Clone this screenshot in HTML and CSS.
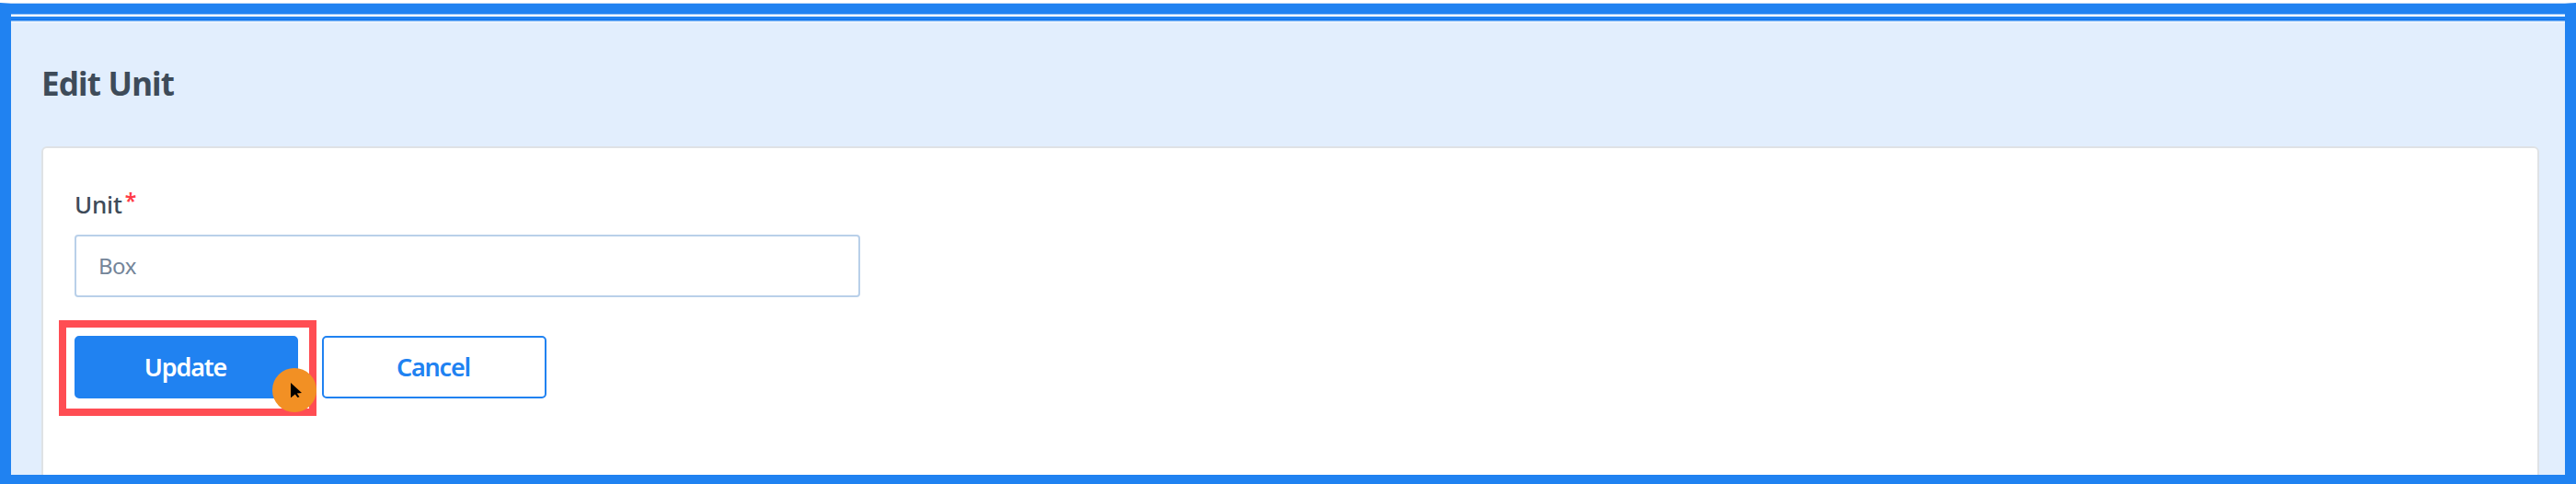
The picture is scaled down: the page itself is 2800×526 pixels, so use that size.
FILE: index.html
```
<!DOCTYPE html>
<html lang="en">
<head>
    <meta charset="UTF-8">
    <meta name="viewport" content="width=device-width, initial-scale=1.0">
    <title>Edit Unit</title>
    <link rel="stylesheet" href="styles.css">
</head>
<body>
    <div class="frame">
        <div class="top-line"></div>
        <main class="page">
            <h1>Edit Unit</h1>
            <form class="card">
                <label for="unit">Unit<span class="required">*</span></label>
                <input type="text" id="unit" value="Box">
                <div class="actions">
                    <div class="highlight">
                        <button type="button" class="btn btn-primary"><span>Update</span></button>
                        <svg class="pointer" width="48" height="48" viewBox="0 0 48 48">
                            <circle cx="24" cy="24" r="24" fill="#f29024"/>
                            <path d="M20 16 L32 27 L26.8 27.5 L29.5 31.3 L27.5 32 L24.8 28.6 L20 32.3 Z" fill="#000"/>
                        </svg>
                    </div>
                    <button type="button" class="btn btn-outline"><span>Cancel</span></button>
                </div>
            </form>
        </main>
    </div>
</body>
</html>
```
FILE: styles.css
```
* {
    box-sizing: border-box;
}

body {
    margin: 0;
    padding-top: 3px;
    height: 526px;
    overflow: hidden;
    background: #fff;
    font-family: "Noto Sans", "Open Sans", sans-serif;
    color: #3e4b59;
}

.frame {
    height: 523px;
    border: 12px solid #2082f1;
    border-top: 1px solid #c4dcf8;
    border-bottom-width: 10px;
    background: #e2eefd;
    overflow: hidden;
    display: flex;
    flex-direction: column;
    box-shadow: inset 0 11px #2082f1;
    padding-top: 11px;
}

.top-line {
    flex: none;
    height: 10px;
    background: linear-gradient(#8fc0f8 1px, #fff 1px, #fff 3px, #2082f1 3px, #2082f1 6px, #0d71ee 6px, #0d71ee 7px, #62a8f5 7px, #62a8f5 8px, #cfe3fb 8px, #cfe3fb 9px, #f3f8fe 9px);
}

.page {
    flex: 1;
    min-height: 0;
    padding: 0 28px 0 33px;
}

h1 {
    margin: 0;
    padding: 42px 0 0 0;
    height: 134px;
    font-size: 35px;
    line-height: 48px;
    font-weight: 700;
    letter-spacing: -0.8px;
}

.card {
    height: 420px;
    border: 2px solid #dfe2e5;
    border-radius: 6px;
    background: #fff;
    padding: 43px 34px;
}

label {
    display: flex;
    height: 51px;
    font-size: 26px;
    line-height: 36px;
    font-weight: 500;
    letter-spacing: -0.2px;
}

.required {
    margin-left: 3px;
    font-size: 23px;
    line-height: 28px;
    font-weight: 600;
    color: #ff3b48;
}

input {
    display: block;
    width: 854px;
    height: 68px;
    padding: 0 24px 2px;
    border: 2px solid #b9d0e9;
    border-radius: 4px;
    font: 400 24px "Noto Sans", "Open Sans", sans-serif;
    letter-spacing: -0.5px;
    color: #748599;
}

/* pulled out so the buttons line up with the input */
.actions {
    display: flex;
    align-items: flex-start;
    gap: 6px;
    margin: 25px 0 0 -17px;
}

.highlight {
    position: relative;
    width: 280px;
    height: 104px;
    padding: 9px;
    border: 8px solid #ff4d53;
}

.pointer {
    position: absolute;
    right: -8px;
    bottom: -4px;
}

.btn {
    display: block;
    width: 243px;
    height: 68px;
    padding: 0 2px 1px 0;
    border: 2px solid #2082f1;
    border-radius: 5px;
    font: 600 27px "Noto Sans", "Open Sans", sans-serif;
    letter-spacing: -1.2px;
}

.btn-primary {
    background: #2082f1;
    color: #fff;
}

.btn-outline {
    width: 244px;
    margin-top: 17px;
    background: #fff;
    color: #2082f1;
}
```
